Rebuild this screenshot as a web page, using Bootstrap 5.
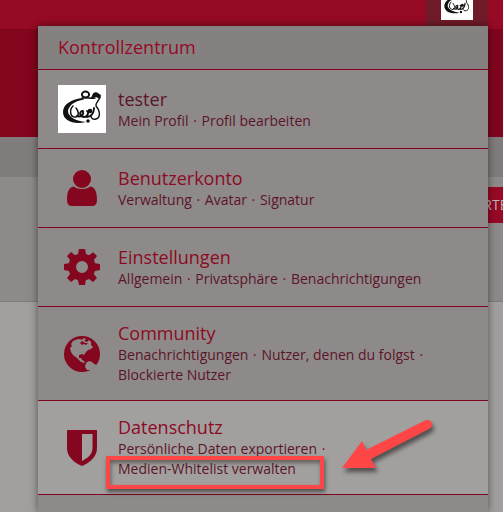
<!DOCTYPE html>
<html lang="de">
<head>
<meta charset="utf-8">
<meta name="viewport" content="width=device-width, initial-scale=1">
<title>Kontrollzentrum</title>
<link href="https://cdn.jsdelivr.net/npm/bootstrap@5.3.0/dist/css/bootstrap.min.css" rel="stylesheet">
<style>
body { font-family: "Open Sans", "Noto Sans", sans-serif; font-size: 14px; line-height: 20px; background: #a2a09f; }
.page { min-height: 100vh; }
.topbar { height: 29px; background: #960a25; padding-right: 15px; }
.user-tab { height: 26px; padding: 0 15px 6px; background: #701b28; }
.hero { height: 108px; background: #80051d; }
.crumbs { height: 40px; background: #7f7c7b; }
.toolbar { height: 125px; padding-top: 10px; background: #8e8a89; border-bottom: 1px solid #7f7c7b; }
.start-btn { margin-right: -27px; height: 36px; padding: 0 12px; background: #980925; color: #b9b5b6; font-size: 14px; line-height: 20px; }
.control-menu { left: 38px; right: 15px; top: 26px; bottom: 0; background: #8e8a89; box-shadow: 0 0 8px rgba(0,0,0,.5); color: #5b1528; }
.menu-head { height: 44px; padding: 0 20px; background: #858180; border-bottom: 1px solid #80051d; color: #960a25; font-size: 18px; line-height: 23px; }
.menu-row { padding: 15px 20px; gap: 12px; border-bottom: 1px solid #80051d; }
.menu-row.current { background: #a2a09f; }
.menu-icon { width: 48px; height: 48px; color: #85061f; }
.menu-title { font-size: 18px; line-height: 23px; color: #8c0a24; }
.menu-title.user-name, .links a { color: #5b1528; }
.menu-row a { text-decoration: none; }
.dot { margin: 0 1px; color: #85061f; }
.marker { left: 68px; top: 55px; width: 218px; height: 33px; border: 4px solid #fd4645; box-shadow: 1px 3px 4px rgba(0,0,0,.5), inset 1px 3px 4px rgba(0,0,0,.4); }
.arrow { left: 300px; top: 14px; filter: drop-shadow(2px 4px 2px rgba(0,0,0,.5)); }
</style>
</head>
<body>
<svg class="d-none" aria-hidden="true">
<symbol id="logo" viewBox="0 0 48 48">
<rect width="48" height="48" fill="#fff"/>
<path d="M25 13C14 14 5 19 5 27C5 36 16 40 28 37C18 36 10 32 10 26C11 20 17 16 26 14.500Z" fill="#111"/>
<g fill="none" stroke="#111" stroke-linecap="round" stroke-linejoin="round">
<ellipse cx="27.500" cy="9.500" rx="3.600" ry="3" stroke-width="1.900"/>
<path d="M24 13C29 12 33 14 37 13M42 12C41 16 37 18 38 21C43 27 42 33 38 34C35 35 33 33 33 31" stroke-width="1.400"/>
<path d="M15 21C11 25 12 33 18 32C22 31 20 25 18 23" stroke-width="1.500"/>
<path d="M19 31C23 33 26 29 25 26C21 26 21 31 26 32C30 32 31 27 29 26M29 32C33 32 36 28 36 23" stroke-width="1.900"/>
</g>
<path d="M34 11C35 6 40 7 41 9L43 10L42 14L38 12L32 14Z" fill="#111"/>
<circle cx="32" cy="26" r="2.300" fill="#111"/><circle cx="30" cy="36" r="1.800" fill="#111"/>
</symbol>
</svg>
<div class="page position-relative overflow-hidden">
<header class="topbar d-flex justify-content-end align-items-start">
<a href="#" class="user-tab d-flex align-items-end overflow-hidden" aria-label="Kontrollzentrum öffnen"><svg class="flex-shrink-0" width="32" height="32" aria-hidden="true"><use href="#logo"/></svg></a>
</header>
<div class="hero"></div>
<div class="crumbs"></div>
<div class="toolbar d-flex justify-content-end align-items-start">
<button type="button" class="start-btn btn rounded-0 border-0 text-nowrap">STARTEN</button>
</div>
<nav class="control-menu position-absolute" aria-label="Kontrollzentrum">
<div class="menu-head d-flex align-items-center">Kontrollzentrum</div>
<div class="menu-row d-flex align-items-center">
<svg class="menu-icon flex-shrink-0" aria-hidden="true"><use href="#logo"/></svg>
<div><a href="#" class="menu-title user-name d-block">tester</a>
<div class="links"><a href="#">Mein Profil</a> <span class="dot">·</span> <a href="#">Profil bearbeiten</a></div></div>
</div>
<div class="menu-row d-flex align-items-center">
<svg class="menu-icon flex-shrink-0" viewBox="0 0 48 48" fill="currentColor" aria-hidden="true"><circle cx="24" cy="15" r="9"/><path d="M15.500 22.500C11 23 9 28 9 36Q9 42 14 42H34Q39 42 39 36C39 28 37 23 32.500 22.500Q29 25 24 25T15.500 22.500Z"/></svg>
<div><a href="#" class="menu-title d-block">Benutzerkonto</a>
<div class="links"><a href="#">Verwaltung</a> <span class="dot">·</span> <a href="#">Avatar</a> <span class="dot">·</span> <a href="#">Signatur</a></div></div>
</div>
<div class="menu-row d-flex align-items-center">
<svg class="menu-icon flex-shrink-0" viewBox="0 0 48 48" fill="currentColor" aria-hidden="true"><path fill-rule="evenodd" d="M21 6H27L28 11L31 12.200L35.200 9.200L39 13L36 17L37 20.200L42 21V27L37 28L35.800 31L39 35L35 39L31 36L27.800 37.200L27 42H21L20 37.200L17 36L13 39L9 35L12 31L10.800 28L6 27V21L10.800 20.200L12 17L9 13L13 9L17 12.200L20 11ZM24 18A6 6 0 1 0 24 30A6 6 0 1 0 24 18Z"/></svg>
<div><a href="#" class="menu-title d-block">Einstellungen</a>
<div class="links"><a href="#">Allgemein</a> <span class="dot">·</span> <a href="#">Privatsphäre</a> <span class="dot">·</span> <a href="#">Benachrichtigungen</a></div></div>
</div>
<div class="menu-row d-flex align-items-center">
<svg class="menu-icon flex-shrink-0" viewBox="0 0 48 48" aria-hidden="true"><circle cx="24" cy="24" r="18" fill="currentColor"/><path fill="#8e8a89" d="M13 14L15 11L20 9L24 9.500L26 8L28 9L26 11L29 12L31 10L33 12L33 15L35 17L33 19L30 20L28 22L26 25L24 24L21 25L21 28L23 28L24 30L26 31L27 33L23 32L19 28L15 25L13 22L12 18L14 16ZM28 33L31 31L34 32L36 34L39 35L37 37L33 40L29 40L27 37Z"/><path fill="currentColor" d="M24 11L27 13L30 13L28 15L26 14L24 15L22 13Z"/></svg>
<div><a href="#" class="menu-title d-block">Community</a>
<div class="links"><a href="#">Benachrichtigungen</a> <span class="dot">·</span> <a href="#">Nutzer, denen du folgst</a> <span class="dot">·</span><br><a href="#">Blockierte Nutzer</a></div></div>
</div>
<div class="menu-row current position-relative d-flex align-items-center">
<svg class="menu-icon flex-shrink-0" viewBox="0 0 48 48" fill="currentColor" aria-hidden="true"><path fill-rule="evenodd" d="M10 6H38Q39 6 39 7V24C39 32 33 38 24 42C15 38 9 32 9 24V7Q9 6 10 6ZM24 10V37C30 34 34.500 30 34.500 24V10Z"/></svg>
<div><a href="#" class="menu-title d-block">Datenschutz</a>
<div class="links"><a href="#">Persönliche Daten exportieren</a> <span class="dot">·</span><br><a href="#">Medien-Whitelist verwalten</a></div></div>
<div class="marker position-absolute"></div>
<svg class="arrow position-absolute" width="100" height="60" viewBox="0 0 100 60" aria-hidden="true"><path fill="#fd4645" d="M4 53L24 26L28 35L87 5.500C93 3 97 10 91 14L33 44L38 53Z"/></svg>
</div>
</nav>
</div>
<script src="https://cdn.jsdelivr.net/npm/bootstrap@5.3.0/dist/js/bootstrap.bundle.min.js"></script>
</body>
</html>
